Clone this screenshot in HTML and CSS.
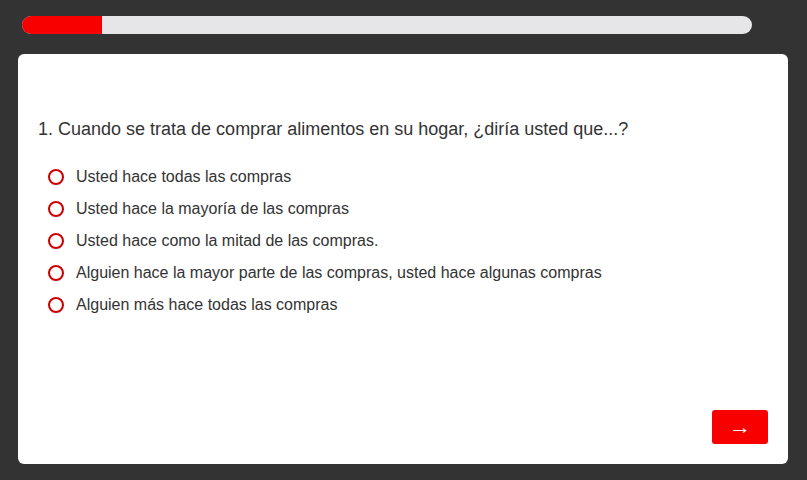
FILE: index.html
```html
<!DOCTYPE html>
<html lang="es">
<head>
  <meta charset="UTF-8">
  <title>Encuesta</title>
  <link rel="stylesheet" href="styles.css">
</head>
<body>

  <!-- Progress bar -->
  <div class="progress">
    <div class="progress-fill" style="width: 11%"></div>
  </div>

  <!-- Question card -->
  <div class="card">
    <div class="question">1. Cuando se trata de comprar alimentos en su hogar, ¿diría usted que...?</div>

    <div class="options">
      <label class="option"><span class="radio"></span>Usted hace todas las compras</label>
      <label class="option"><span class="radio"></span>Usted hace la mayoría de las compras</label>
      <label class="option"><span class="radio"></span>Usted hace como la mitad de las compras.</label>
      <label class="option"><span class="radio"></span>Alguien hace la mayor parte de las compras, usted hace algunas compras</label>
      <label class="option"><span class="radio"></span>Alguien más hace todas las compras</label>
    </div>

    <div class="card-footer">
      <button class="next-btn">&rarr;</button>
    </div>
  </div>

</body>
</html>
```

FILE: styles.css
```css
/* Base */
html, body {
  height: 100%;
}

body {
  margin: 0;
  padding: 16px 19px 16px 18px;
  box-sizing: border-box;
  background-color: #333333;
  font-family: 'Liberation Sans', Arial, sans-serif;
  color: #333;
  display: flex;
  flex-direction: column;
}

/* Progress bar */
.progress {
  height: 18px;
  margin: 0 36px 20px 4px;
  background-color: #e6e6e8;
  border-radius: 9px;
  overflow: hidden;
}

.progress-fill {
  height: 100%;
  background-color: #f80000;
}

/* Card */
.card {
  flex: 1;
  background-color: white;
  border-radius: 6px;
  padding: 65px 20px 20px 20px;
  display: flex;
  flex-direction: column;
}

.question {
  font-size: 18px;
  line-height: 20px;
  margin-bottom: 22px;
}

.options {
  display: flex;
  flex-direction: column;
  padding-left: 10px;
}

.option {
  display: flex;
  align-items: center;
  height: 32px;
  font-size: 16px;
  cursor: pointer;
}

.radio {
  width: 12px;
  height: 12px;
  border: 2px solid #cc0000;
  border-radius: 50%;
  margin-right: 12px;
  flex-shrink: 0;
}

/* Footer with next button */
.card-footer {
  margin-top: auto;
  display: flex;
  justify-content: flex-end;
}

.next-btn {
  width: 56px;
  height: 34px;
  background-color: #f80000;
  color: white;
  border: none;
  border-radius: 3px;
  font-size: 22px;
  line-height: 1;
  cursor: pointer;
}
```
